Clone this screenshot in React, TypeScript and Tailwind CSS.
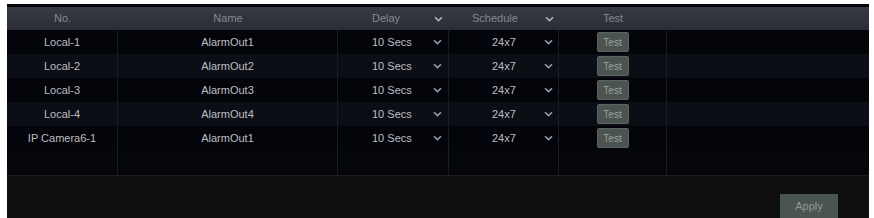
import React from "react";

const rows = [
  { no: "Local-1", name: "AlarmOut1" },
  { no: "Local-2", name: "AlarmOut2" },
  { no: "Local-3", name: "AlarmOut3" },
  { no: "Local-4", name: "AlarmOut4" },
  { no: "IP Camera6-1", name: "AlarmOut1" },
];

function Chevron({ className }: { className?: string }) {
  return (
    <svg width="9" height="6" viewBox="0 0 9 6" className={className}>
      <path d="M1 1.2 L4.5 4.6 L8 1.2" fill="none" stroke="currentColor" strokeWidth="1.6" />
    </svg>
  );
}

export default function App() {
  return (
    <div
      className="h-[218px] w-[874px] bg-white pl-[7px] pr-[5px] pt-[4px] text-[11px]"
      style={{ fontFamily: '"Liberation Sans", Arial, sans-serif' }}
    >
      <div className="flex h-full flex-col bg-[#05060a]">
        {/* header */}
        <div className="mt-[3px] flex h-[23px] items-center bg-gradient-to-b from-[#383a42] to-[#2b2d34] text-[#858891]">
          <div className="w-[111px] text-center">No.</div>
          <div className="w-[220px] text-center">Name</div>
          <div className="flex w-[111px] items-center">
            <span className="ml-[34px]">Delay</span>
            <Chevron className="ml-auto mr-[6px] text-[#aeb2c0]" />
          </div>
          <div className="flex w-[110px] items-center">
            <span className="ml-[23px]">Schedule</span>
            <Chevron className="ml-auto mr-[5px] text-[#aeb2c0]" />
          </div>
          <div className="w-[108px] text-center">Test</div>
          <div className="flex-1" />
        </div>

        {/* body */}
        <div className="flex h-[146px] flex-col border-b border-[#1d1d21] text-[#bdbec2]">
          {rows.map((r, i) => (
            <div
              key={i}
              className={`flex h-[24px] items-center ${i % 2 === 1 ? "bg-[#0c0e15]" : "bg-[#04050a]"}`}
            >
              <div className="flex h-full w-[111px] items-center justify-center border-r border-[#1a1c23]">{r.no}</div>
              <div className="flex h-full w-[220px] items-center justify-center border-r border-[#1a1c23]">{r.name}</div>
              <div className="flex h-full w-[111px] items-center border-r border-[#1a1c23]">
                <span className="ml-[34px]">10 Secs</span>
                <Chevron className="ml-auto mr-[6px] text-[#959aa6]" />
              </div>
              <div className="flex h-full w-[110px] items-center border-r border-[#1a1c23]">
                <span className="ml-[43px]">24x7</span>
                <Chevron className="ml-auto mr-[5px] text-[#959aa6]" />
              </div>
              <div className="flex h-full w-[108px] items-center justify-center border-r border-[#1a1c23]">
                <button className="h-[20px] w-[32px] rounded-[2px] border border-[#5a6460] bg-[#4b5451] text-[10px] text-[#9aa39f]">
                  Test
                </button>
              </div>
              <div className="h-full flex-1" />
            </div>
          ))}
          <div className="flex flex-1">
            <div className="w-[111px] border-r border-[#1a1c23]" />
            <div className="w-[220px] border-r border-[#1a1c23]" />
            <div className="w-[111px] border-r border-[#1a1c23]" />
            <div className="w-[110px] border-r border-[#1a1c23]" />
            <div className="w-[108px] border-r border-[#1a1c23]" />
            <div className="flex-1" />
          </div>
        </div>

        {/* footer */}
        <div className="flex flex-1 items-start justify-end bg-[#100f0f] pr-[31px] pt-[18px]">
          <button className="h-[24px] w-[58px] bg-[#4a5450] text-[11px] text-[#8f9a95]">Apply</button>
        </div>
      </div>
    </div>
  );
}
